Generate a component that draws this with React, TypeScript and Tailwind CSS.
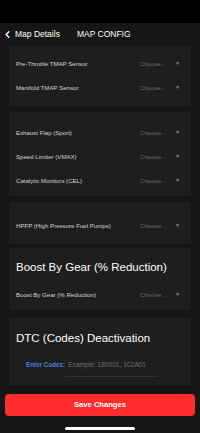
import { ChevronLeft } from "lucide-react";

const font = { fontFamily: "'Liberation Sans', Arial, sans-serif" };

const SelectRow = ({ label }: { label: string }) => (
  <div className="flex h-6 items-center justify-between pl-[7px] pr-[11px]">
    <span className="text-[6.1px] text-[#d4d4d4]">{label}</span>
    <div className="flex items-center">
      <span className="w-[35px] text-[6.1px] text-[#6b6b6b]">Choose...</span>
      <span className="text-[5px] text-[#8a8a8a]">▼</span>
    </div>
  </div>
);

export default function App() {
  return (
    <div className="flex min-h-[433px] w-[200px] flex-col bg-[#151515]" style={font}>
      <div className="h-[23px] shrink-0 bg-black" />
      <div className="flex h-[22px] shrink-0 items-center bg-[#161616]">
        <div className="flex items-center gap-[2px] pl-[2px]">
          <ChevronLeft className="h-[11px] w-[11px] text-white" strokeWidth={3} />
          <span className="text-[8.5px] text-white">Map Details</span>
        </div>
        <span className="ml-[17px] text-[8.5px] text-white">MAP CONFIG</span>
      </div>

      <div className="mx-[9px] mt-[1px] bg-[#1e1e1e] pt-[6px] pb-[6px]">
        <SelectRow label="Pre-Throttle TMAP Sensor" />
        <SelectRow label="Manifold TMAP Sensor" />
      </div>

      <div className="mx-[9px] mt-[6px] bg-[#1e1e1e] pt-[9px] pb-[3px]">
        <SelectRow label="Exhaust Flap (Sport)" />
        <SelectRow label="Speed Limiter (VMAX)" />
        <SelectRow label="Catalytic Monitors (CEL)" />
      </div>

      <div className="mx-[9px] mt-[6px] bg-[#1e1e1e] pt-[12px] pb-[6px]">
        <SelectRow label="HPFP (High Pressure Fuel Pumps)" />
      </div>

      <div className="mx-[9px] mt-[4px] bg-[#1e1e1e] pt-[10px] pb-[3px]">
        <div className="pl-[7px] text-[11.5px] leading-[18px] text-white">
          Boost By Gear (% Reduction)
        </div>
        <div className="mt-[7px]">
          <SelectRow label="Boost By Gear (% Reduction)" />
        </div>
      </div>

      <div className="mx-[9px] mt-[8px] h-[67px] bg-[#1e1e1e] pt-[11px]">
        <div className="pl-[7px] text-[11.5px] leading-[18px] text-white">
          DTC (Codes) Deactivation
        </div>
        <div className="mt-[13px] flex items-start pl-[17px]">
          <span className="text-[6.3px] leading-[10px] font-bold text-[#4a82d8]">Enter Codes:</span>
          <div className="w-[93px] border-b border-[#333] pb-[6px] pl-[3px]">
            <span className="block text-[6.6px] leading-[10px] text-[#6e6e6e]">
              Example: 180001, 102A01
            </span>
          </div>
        </div>
      </div>

      <div className="mx-[5px] mt-[9px] flex h-[22px] items-center justify-center rounded-[4px] bg-[#fe2c2c]">
        <span className="text-[7.6px] font-bold text-white">Save Changes</span>
      </div>

      <div className="mt-[11px] flex justify-center">
        <div className="h-[3px] w-[70px] rounded-full bg-white" />
      </div>
    </div>
  );
}
